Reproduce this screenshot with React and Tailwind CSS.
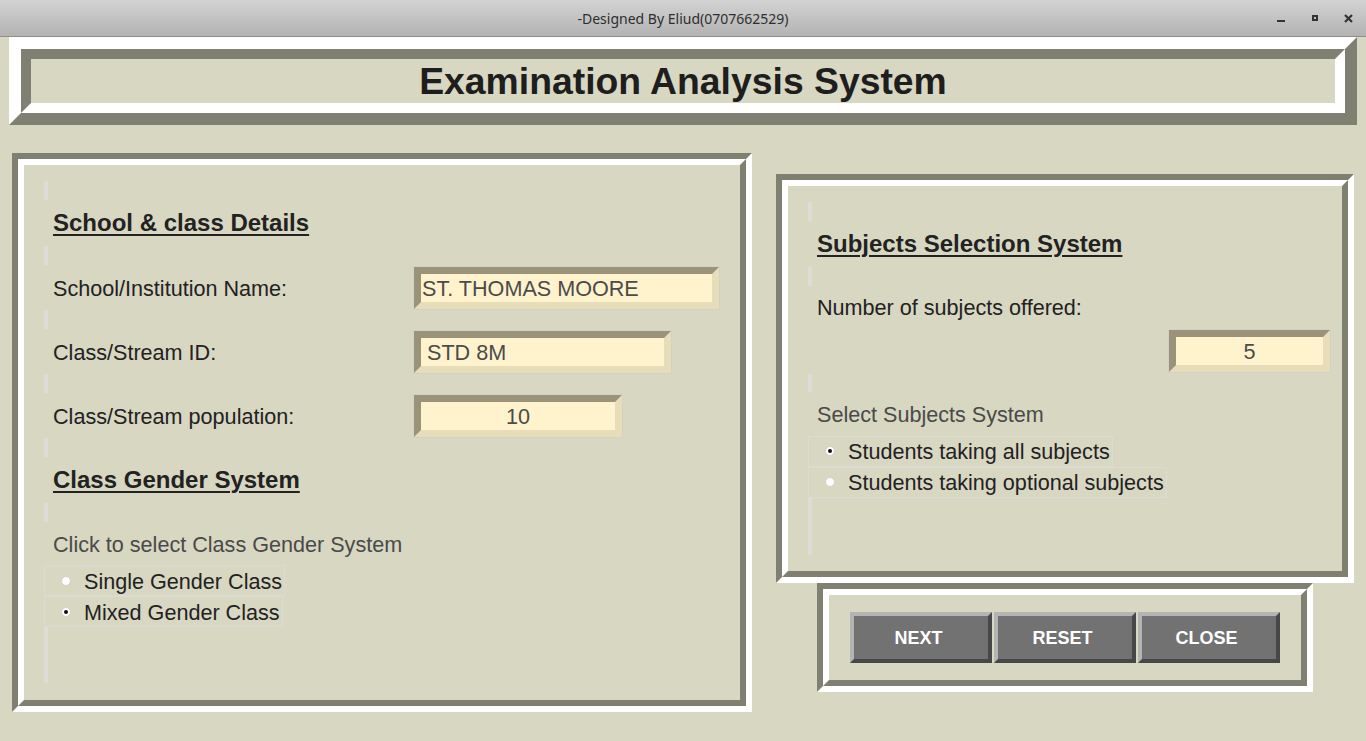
import React from "react";

function Groove({ className = "", innerClassName = "", children }) {
  return (
    <div className={`border-[6px] border-t-[#808072] border-l-[#808072] border-b-white border-r-white ${className}`}>
      <div className={`border-[6px] border-t-white border-l-white border-b-[#808072] border-r-[#808072] ${innerClassName}`}>
        {children}
      </div>
    </div>
  );
}

function Bar({ h }) {
  return <div className={`w-[4px] bg-[#dddcd6] ${h}`} />;
}

function Entry({ w, value, align = "left" }) {
  return (
    <div className={`border border-[#d2d1c6] ${w} h-[44px] flex`}>
      <div className="flex-1 border-[7px] border-t-[#9a9379] border-l-[#9a9379] border-b-[#e7ddb9] border-r-[#e7ddb9] bg-[#fff3cd] flex items-center">
        <span
          className={`w-full text-[21.6px] leading-none pt-[2px] text-[#4b4b4b] ${
            align === "center" ? "text-center" : align === "pad" ? "pl-[6px]" : "pl-[1px]"
          }`}
        >
          {value}
        </span>
      </div>
    </div>
  );
}

function Radio({ checked, label }) {
  return (
    <div className="self-start h-[31px] border border-[#dcdbd3] flex items-center pl-[16px] pr-[2px]">
      <div className="w-[10px] h-[10px] rounded-full bg-white border border-[#d0d0ca] flex items-center justify-center">
        {checked && <div className="w-[4px] h-[4px] rounded-full bg-[#111]" />}
      </div>
      <span className="ml-[13px] text-[21.6px] leading-none pt-[2px] text-[#222]">{label}</span>
    </div>
  );
}

function Heading({ children }) {
  return (
    <div className="h-[46px] flex items-center pl-[9px]">
      <span className="text-[24px] font-bold underline underline-offset-[3px] decoration-[2px] text-[#222] leading-none">
        {children}
      </span>
    </div>
  );
}

function FieldRow({ label, children }) {
  return (
    <div className="h-[45px] flex items-center">
      <div className="w-[369px] pl-[9px] text-[21.6px] leading-none pt-[2px] text-[#222]">{label}</div>
      {children}
    </div>
  );
}

function Btn({ children }) {
  return (
    <div className="w-[142px] h-[51px] border-[4px] border-t-[#b4b4b4] border-l-[#b4b4b4] border-b-[#474747] border-r-[#474747] bg-[#727272] flex items-center justify-center pr-[5px]">
      <span className="text-white font-bold text-[18px] leading-none pt-[1px]">{children}</span>
    </div>
  );
}

export default function App() {
  return (
    <div
      className="w-[1366px] h-[741px] overflow-hidden bg-[#d8d7c2] flex flex-col"
      style={{ fontFamily: '"Liberation Sans", Arial, sans-serif' }}
    >
      {/* Title bar */}
      <div className="h-[37px] shrink-0 border-b border-[#8e8e8e] bg-gradient-to-b from-[#d3d3d3] to-[#b3b3b3] relative flex items-center justify-center">
        <span
          className="text-[14px] text-[#2e2e2e]"
          style={{ fontFamily: '"Noto Sans", "Open Sans", sans-serif' }}
        >
          -Designed By Eliud(0707662529)
        </span>
        <div className="absolute right-0 top-0 h-[36px] flex items-center">
          <div className="w-[34px] flex justify-center pt-[6px]">
            <div className="w-[8px] h-[2px] bg-[#333]" />
          </div>
          <div className="w-[34px] flex justify-center">
            <div className="w-[6px] h-[6px] border-[2px] border-[#333]" />
          </div>
          <div className="w-[34px] flex justify-center pr-[2px]">
            <svg width="9" height="9" viewBox="0 0 9 9">
              <path d="M1 1 L8 8 M8 1 L1 8" stroke="#333" strokeWidth="2.2" />
            </svg>
          </div>
        </div>
      </div>

      {/* Header frame (ridge) */}
      <div className="ml-[9px] mr-[9px] border-[12px] border-t-white border-l-white border-b-[#808072] border-r-[#808072]">
        <div className="border-[10px] border-t-[#808072] border-l-[#808072] border-b-white border-r-white h-[64px] flex items-center justify-center">
          <span className="text-[37.33px] font-bold text-[#1e1e1e] leading-none pt-[2px]">Examination Analysis System</span>
        </div>
      </div>

      {/* Body */}
      <div className="flex items-center mt-[28px] ml-[12px]">
        {/* Left frame */}
        <Groove className="w-[740px] h-[559px]" innerClassName="h-full pl-[20px] pt-[16px]">
          <div className="flex flex-col">
            <Bar h="h-[19px]" />
            <Heading>School &amp; class Details</Heading>
            <Bar h="h-[19px]" />
            <FieldRow label="School/Institution Name:">
              <Entry w="w-[307px]" value="ST. THOMAS MOORE" />
            </FieldRow>
            <Bar h="h-[19px]" />
            <FieldRow label="Class/Stream ID:">
              <Entry w="w-[259px]" value="STD 8M" align="pad" />
            </FieldRow>
            <Bar h="h-[19px]" />
            <FieldRow label="Class/Stream population:">
              <Entry w="w-[210px]" value="10" align="center" />
            </FieldRow>
            <Bar h="h-[19px]" />
            <Heading>Class Gender System</Heading>
            <Bar h="h-[19px]" />
            <div className="h-[43px] flex items-center pl-[9px] text-[21.6px] leading-none pt-[2px] text-[#4a4a4a]">
              Click to select Class Gender System
            </div>
            <Radio checked={false} label="Single Gender Class" />
            <Radio checked={true} label="Mixed Gender Class" />
            <Bar h="h-[56px]" />
          </div>
        </Groove>

        {/* Right column */}
        <div className="ml-[24px] flex flex-col items-center">
          <Groove className="w-[578px] h-[409px]" innerClassName="h-full pl-[20px] pt-[16px] pr-[11px]">
            <div className="flex flex-col">
              <Bar h="h-[19px]" />
              <Heading>Subjects Selection System</Heading>
              <Bar h="h-[19px]" />
              <div className="h-[43px] flex items-center pl-[9px] text-[21.6px] leading-none pt-[2px] text-[#222]">
                Number of subjects offered:
              </div>
              <div className="h-[45px] flex items-center justify-end">
                <Entry w="w-[163px]" value="5" align="center" />
              </div>
              <Bar h="h-[18px]" />
              <div className="h-[44px] flex items-center pl-[9px] text-[21.6px] leading-none pt-[2px] text-[#4a4a4a]">
                Select Subjects System
              </div>
              <Radio checked={true} label="Students taking all subjects" />
              <Radio checked={false} label="Students taking optional subjects" />
              <Bar h="h-[57px]" />
            </div>
          </Groove>
          <Groove className="w-[496px] h-[109px]" innerClassName="h-full flex items-center justify-center gap-[2px]">
            <Btn>NEXT</Btn>
            <Btn>RESET</Btn>
            <Btn>CLOSE</Btn>
          </Groove>
        </div>
      </div>
    </div>
  );
}
